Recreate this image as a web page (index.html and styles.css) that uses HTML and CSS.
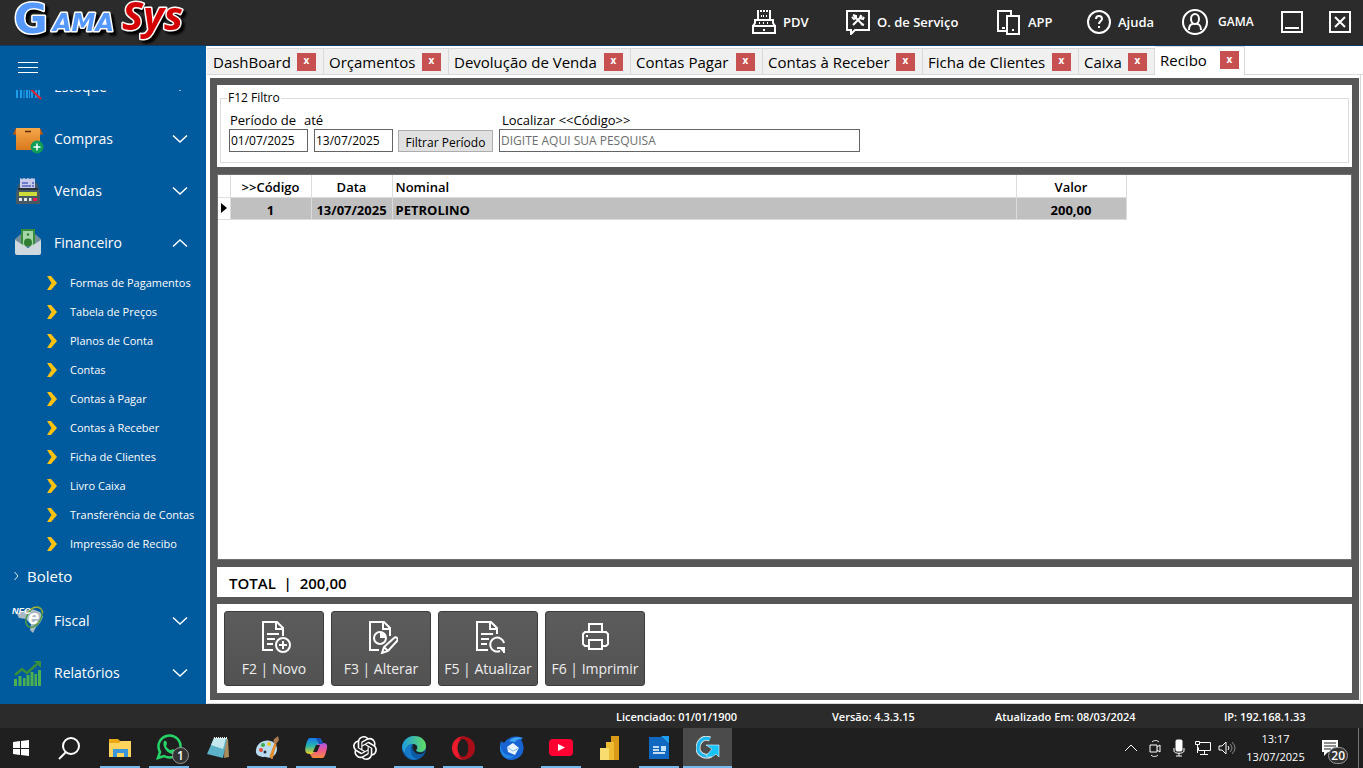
FILE: index.html
```html
<!DOCTYPE html>
<html lang="pt-BR">
<head>
<meta charset="utf-8">
<title>GamaSys</title>
<link rel="stylesheet" href="styles.css">
</head>
<body>
<header class="topbar">
  <svg class="logo" width="180" height="44" viewBox="0 0 180 44" role="img" aria-label="GamaSys">
    <text class="logo-g" x="0" y="33">G</text>
    <text class="logo-ama" x="39" y="31">AMA</text>
    <text class="logo-sys" x="108" y="30">Sys</text>
  </svg>
  <nav class="top-actions">
    <button class="top-btn"><svg width="24" height="26" viewBox="0 0 24 26" class="line-icon"><path d="M6 11V3M18 11V3"/><path d="M5 2h2M8 2h2M11 2h2M14 2h2M17 2h2M9 7h1M11 7h1M14 7h1M3 11h18v3l2 3H1l2-3zM1 17h22v7H1zM7 14h1M11 14h1M15 14h1M11 21h2"/></svg>PDV</button>
    <button class="top-btn"><svg width="24" height="26" viewBox="0 0 24 26" class="line-icon"><path d="M1 2h22v19H9l-4 4v-4H1z"/><path d="M8 7l9 9M16 7l-9 9"/><path d="M7 6l3 1v2l-2 1-2-2M15 15l3 1M15 6l-1 3 3 1 1-2"/></svg>O. de Serviço</button>
    <button class="top-btn"><svg width="24" height="26" viewBox="0 0 24 26" class="line-icon"><path d="M9 22H1V2h13v4M5 19h3M6 2h3M10 7h12v18H10zM15 21h2"/></svg>APP</button>
    <button class="top-btn"><svg width="24" height="26" viewBox="0 0 24 26" class="line-icon"><circle cx="12" cy="13" r="11"/><path d="M9 10c0-4 6-4 6 0 0 2-3 2-3 5"/><path d="M12 17v2"/></svg>Ajuda</button>
    <button class="top-btn top-user"><svg width="26" height="26" viewBox="0 0 26 26" class="line-icon"><circle cx="13" cy="13" r="12"/><ellipse cx="13" cy="10" rx="4" ry="5"/><path d="M7 21c0-4 2-6 4-6M19 21c0-4-2-6-4-6"/></svg>GAMA</button>
    <button class="top-btn" aria-label="Minimizar"><svg width="22" height="22" viewBox="0 0 22 22" class="line-icon"><path d="M1 1h20v20H1zM4 17h14"/></svg></button>
    <button class="top-btn" aria-label="Fechar"><svg width="22" height="22" viewBox="0 0 22 22" class="line-icon"><path d="M1 1h20v20H1zM6 6l10 10M16 6L6 16"/></svg></button>
  </nav>
</header>

<div class="workspace">
  <aside class="sidebar">
    <button class="hamburger" aria-label="Menu"><svg width="20" height="12" viewBox="0 0 20 12"><path d="M0 .5h20M0 5.500h20M0 10.500h20" stroke="#fff"/></svg></button>
    <nav class="menu">
      <button class="menu-item"><svg width="32" height="32" viewBox="0 0 32 32"><path d="M5 4v23M9 4v23M15 4v23M20 4v23M24 4v23M27 4v23" stroke="#1e9be9" stroke-width="2"/><path d="M12 4v23M17.500 4v23" stroke="#1e9be9"/><path d="M5 5l24 23" stroke="#e02030" stroke-width="2"/></svg><span>Estoque</span><svg class="chev" width="14" height="8" viewBox="0 0 14 8"><path d="M0 .5l7 6.500 7-6.500"/></svg></button>
      <button class="menu-item"><svg width="32" height="32" viewBox="0 0 32 32"><defs><linearGradient id="box" x2="0" y2="1"><stop stop-color="#f5a84a"/><stop offset="1" stop-color="#d9781d"/></linearGradient></defs><path d="M4 5L1 11l3 1zM28 5l3 6-3 1z" fill="#c05c12"/><path d="M4 5h24v22H4z" fill="url(#box)"/><path d="M13 8.500h6" stroke="#5a2b0a" stroke-width="1.500"/><circle cx="25" cy="24" r="6.500" fill="#0f9d58"/><path d="M25 20.500v7M21.500 24h7" stroke="#fff" stroke-width="1.500"/></svg><span>Compras</span><svg class="chev" width="14" height="8" viewBox="0 0 14 8"><path d="M0 .5l7 6.500 7-6.500"/></svg></button>
      <button class="menu-item"><svg width="32" height="32" viewBox="0 0 32 32"><path d="M7 8h18l3 10v11H4V18z" fill="#455a64"/><path d="M8 3l2 1 2-1 2 1 2-1 2 1 2-1 2 1 1-1v11H8z" fill="#c5cae9"/><path d="M10 8h6M10 11h9M20 8h2M20 11h2" stroke="#5560c0" stroke-width="1.500"/><path d="M6 14h20" stroke="#263238" stroke-width="2"/><path d="M7 17h18v4H7z" fill="#cddc39"/><path d="M7 23h3v3H7zM12 23h3v3h-3zM17 23h2.500v3H17z" fill="#e6e6e6"/><path d="M21 23h4v3h-4z" fill="#f02050"/></svg><span>Vendas</span><svg class="chev" width="14" height="8" viewBox="0 0 14 8"><path d="M0 .5l7 6.500 7-6.500"/></svg></button>
      <button class="menu-item" aria-expanded="true"><svg width="32" height="32" viewBox="0 0 32 32"><path d="M3 12l6-5h14l6 5v8H3z" fill="#78909c"/><path d="M9 2h14v17H9z" fill="#388e3c"/><path d="M11 4h10v15H11z" fill="#a5d6a7"/><circle cx="16" cy="7.500" r="1.200" fill="#2e7d32"/><path d="M3 13l13 8 13-8v13a2 2 0 0 1-2 2H5a2 2 0 0 1-2-2z" fill="#cfd8dc"/><circle cx="16" cy="15.500" r="4" fill="#2e7d32"/></svg><span>Financeiro</span><svg class="chev" width="14" height="8" viewBox="0 0 14 8"><path d="M0 7.500L7 1l7 6.500"/></svg></button>
      <div class="submenu">
        <button class="sub-item"><svg class="arrow" width="10" height="14" viewBox="0 0 10 14"><path d="M0 0h4l6 7-6 7H0l4.500-7z"/></svg>Formas de Pagamentos</button>
        <button class="sub-item"><svg class="arrow" width="10" height="14" viewBox="0 0 10 14"><path d="M0 0h4l6 7-6 7H0l4.500-7z"/></svg>Tabela de Preços</button>
        <button class="sub-item"><svg class="arrow" width="10" height="14" viewBox="0 0 10 14"><path d="M0 0h4l6 7-6 7H0l4.500-7z"/></svg>Planos de Conta</button>
        <button class="sub-item"><svg class="arrow" width="10" height="14" viewBox="0 0 10 14"><path d="M0 0h4l6 7-6 7H0l4.500-7z"/></svg>Contas</button>
        <button class="sub-item"><svg class="arrow" width="10" height="14" viewBox="0 0 10 14"><path d="M0 0h4l6 7-6 7H0l4.500-7z"/></svg>Contas à Pagar</button>
        <button class="sub-item"><svg class="arrow" width="10" height="14" viewBox="0 0 10 14"><path d="M0 0h4l6 7-6 7H0l4.500-7z"/></svg>Contas à Receber</button>
        <button class="sub-item"><svg class="arrow" width="10" height="14" viewBox="0 0 10 14"><path d="M0 0h4l6 7-6 7H0l4.500-7z"/></svg>Ficha de Clientes</button>
        <button class="sub-item"><svg class="arrow" width="10" height="14" viewBox="0 0 10 14"><path d="M0 0h4l6 7-6 7H0l4.500-7z"/></svg>Livro Caixa</button>
        <button class="sub-item"><svg class="arrow" width="10" height="14" viewBox="0 0 10 14"><path d="M0 0h4l6 7-6 7H0l4.500-7z"/></svg>Transferência de Contas</button>
        <button class="sub-item"><svg class="arrow" width="10" height="14" viewBox="0 0 10 14"><path d="M0 0h4l6 7-6 7H0l4.500-7z"/></svg>Impressão de Recibo</button>
      </div>
      <button class="group-item"><svg width="5" height="8" viewBox="0 0 5 8"><path d="M.5 0L4 4 .5 8" fill="none" stroke="#dce9f5"/></svg>Boleto</button>
      <button class="menu-item"><svg width="32" height="32" viewBox="0 0 32 32"><path d="M5 9l6-3 9-2 8 3 3 5-3 6-4 4-3 6-3-3 1-6-5-5-7-1z" fill="#a9bac6"/><ellipse cx="22" cy="12" rx="7" ry="11" transform="rotate(30 22 12)" fill="none" stroke="#4d9b45" stroke-width="1.500"/><path d="M15 8c5-8 15-7 16 0" fill="none" stroke="#c9b53a"/><text x="0" y="9" class="nfc">NFC</text><text x="16" y="19" class="nfe">e</text></svg><span>Fiscal</span><svg class="chev" width="14" height="8" viewBox="0 0 14 8"><path d="M0 .5l7 6.500 7-6.500"/></svg></button>
      <button class="menu-item"><svg width="32" height="32" viewBox="0 0 32 32"><path d="M2 22h3v7H2zM6.500 19h3v10h-3zM11 21h2.500v8H11zM14.500 18h3v11h-3zM18.500 15h3v14h-3zM22.500 17h2.500v12h-2.500zM26 13h3v16h-3z" fill="#4caf50"/><path d="M3 18l7-6 5 4 10-9" fill="none" stroke="#388e3c" stroke-width="2.500"/><path d="M22 4h7v7z" fill="#388e3c"/></svg><span>Relatórios</span><svg class="chev" width="14" height="8" viewBox="0 0 14 8"><path d="M0 .5l7 6.500 7-6.500"/></svg></button>
    </nav>
  </aside>

  <main class="content">
    <div class="tabs" role="tablist">
      <div class="tab tab-first" role="tab"><span>DashBoard</span><button class="tab-close">x</button></div>
      <div class="tab" role="tab"><span>Orçamentos</span><button class="tab-close">x</button></div>
      <div class="tab" role="tab"><span>Devolução de Venda</span><button class="tab-close">x</button></div>
      <div class="tab" role="tab"><span>Contas Pagar</span><button class="tab-close">x</button></div>
      <div class="tab" role="tab"><span>Contas à Receber</span><button class="tab-close">x</button></div>
      <div class="tab" role="tab"><span>Ficha de Clientes</span><button class="tab-close">x</button></div>
      <div class="tab" role="tab"><span>Caixa</span><button class="tab-close">x</button></div>
      <div class="tab tab-active" role="tab" aria-selected="true"><span>Recibo</span><button class="tab-close">x</button></div>
      <div class="tabs-rest"></div>
    </div>
    <div class="page">
      <div class="frame">
        <section class="panel filter-panel">
          <fieldset class="filter">
            <legend>F12 Filtro</legend>
            <div class="filter-row">
              <div class="filter-group">
                <div class="labels"><label for="from">Período de</label><label for="to">até</label></div>
                <div class="inputs"><input class="date" id="from" type="text" value="01/07/2025"><input class="date" id="to" type="text" value="13/07/2025"></div>
              </div>
              <button class="filter-btn">Filtrar Período</button>
              <div class="filter-group">
                <div class="labels labels-search"><label for="search">Localizar &lt;&lt;Código&gt;&gt;</label></div>
                <input class="search" id="search" type="text" placeholder="DIGITE AQUI SUA PESQUISA">
              </div>
            </div>
          </fieldset>
        </section>
        <section class="panel grid-panel">
          <table class="grid">
            <colgroup><col class="c-mark"><col class="c-code"><col class="c-date"><col class="c-name"><col class="c-value"></colgroup>
            <thead><tr><th></th><th>&gt;&gt;Código</th><th>Data</th><th class="left">Nominal</th><th>Valor</th></tr></thead>
            <tbody><tr><td class="mark"><svg width="6" height="10" viewBox="0 0 6 10"><path d="M0 0l6 5-6 5z"/></svg></td><td>1</td><td>13/07/2025</td><td class="left">PETROLINO</td><td>200,00</td></tr></tbody>
          </table>
        </section>
        <section class="panel total">TOTAL&nbsp; |&nbsp; 200,00</section>
        <section class="panel actions">
          <button class="action"><svg width="34" height="34" viewBox="0 0 34 34" class="line-icon"><path d="M16 30H6V2h14l6 6v8M19 2v7h7M10 14h12M10 19h8M10 24h6"/><circle cx="26" cy="25" r="7"/><path d="M26 21v8M22 25h8"/></svg>F2 | Novo</button>
          <button class="action"><svg width="34" height="34" viewBox="0 0 34 34" class="line-icon"><path d="M15 30H6V2h14l6 6v8M19 2v7h7"/><circle cx="16" cy="18" r="6"/><path d="M17 13v4h4c0-2-2-4-4-4z" fill="#fff"/><path d="M18 33l2-6 10-9c2-2 5 1 3 3l-9 10zM20 27l4 4" fill="#575757"/></svg>F3 | Alterar</button>
          <button class="action"><svg width="34" height="34" viewBox="0 0 34 34" class="line-icon"><path d="M17 30H6V2h14l6 6v6M19 2v7h7M10 14h12M10 19h8M10 24h6"/><path d="M33 23a7 7 0 1 0-4 8"/><path d="M33 27v6l-6-6z" fill="#fff" stroke="none"/><path d="M26 28h7v5"/></svg>F5 | Atualizar</button>
          <button class="action"><svg width="34" height="34" viewBox="0 0 34 34" class="line-icon"><path d="M11 11V4h13v7M11 26H7l-2-2V14l2-2h21l2 2v10l-2 2h-4M11 20h13v9H11zM8 16h2"/></svg>F6 | Imprimir</button>
        </section>
      </div>
    </div>
  </main>
</div>

<footer class="statusbar"><span>Licenciado: 01/01/1900</span><span>Versão: 4.3.3.15</span><span>Atualizado Em: 08/03/2024</span><span>IP: 192.168.1.33</span></footer>

<div class="taskbar">
  <button class="task task-start" aria-label="Iniciar"><svg width="16" height="16" viewBox="0 0 16 16"><path d="M0 2l7-1v7H0zM8 1l8-1v8H8zM0 9h7v6l-7-1zM8 9h8v7l-8-1z" fill="#fff"/></svg></button>
  <button class="task task-search" aria-label="Pesquisar"><svg width="24" height="24" viewBox="0 0 24 24"><circle cx="14" cy="10" r="8" fill="none" stroke="#fff" stroke-width="2"/><path d="M9 16l-7 7" stroke="#fff" stroke-width="2"/></svg></button>
  <button class="task open" aria-label="Explorador"><svg width="24" height="24" viewBox="0 0 24 24"><path d="M1 3h9l2 2h11v16H1z" fill="#e9a912"/><path d="M1 7h10l2-2h10v16H1z" fill="#ffd35c"/><path d="M5 13h15v8h-4v-4H9v4H5z" fill="#3c96db"/></svg></button>
  <button class="task open" aria-label="WhatsApp"><svg width="34" height="30" viewBox="0 0 34 30"><path d="M6 25l2-6a11 11 0 1 1 4 4z" fill="none" stroke="#25d366" stroke-width="2.500"/><path d="M12 8c2-1 3 1 3 3l-1 2c1 2 3 4 5 4l2-1c2 1 3 2 2 4-5 4-14-6-11-12z" fill="#25d366"/></svg><span class="count">1</span></button>
  <button class="task" aria-label="Bloco de notas"><svg width="24" height="24" viewBox="0 0 24 24"><path d="M19 2l3 1 1 18-5 1z" fill="#a98b5c"/><path d="M8 2h13l-4 20-16-4z" fill="#5cb3c9"/><path d="M8 2h12l-3 11-12-4z" fill="#c3e9ee"/><path d="M8 2h13" stroke="#eee" stroke-dasharray="1 1" stroke-width="2"/></svg></button>
  <button class="task open" aria-label="Paint"><svg width="26" height="24" viewBox="0 0 26 24"><path d="M2 14C3 6 12 2 19 6c6 4 5 12-1 15-4 2-6-1-8 0-4 0-9-2-8-7z" fill="#b9dcf0"/><circle cx="7" cy="14" r="2" fill="#e64b35"/><circle cx="9" cy="9" r="2" fill="#3cad48"/><circle cx="15" cy="8" r="2" fill="#e9c42e"/><circle cx="11" cy="16" r="1.500" fill="#20303a"/><path d="M16 20l5-13 1 1-4 15z" fill="#e58b2b" stroke="#e58b2b"/><path d="M20 7c-2-4 2-5 4-7l1 4-3 4z" fill="#ad7b4f"/></svg></button>
  <button class="task open" aria-label="Copilot"><svg width="24" height="22" viewBox="0 0 24 22"><defs><linearGradient id="cp1" x2="0" y2="1"><stop stop-color="#1678f2"/><stop offset=".5" stop-color="#27b6a7"/><stop offset="1" stop-color="#f0cd22"/></linearGradient><linearGradient id="cp2" x2="0" y2="1"><stop stop-color="#a957e8"/><stop offset=".5" stop-color="#ef598d"/><stop offset="1" stop-color="#f78b3c"/></linearGradient></defs><path d="M6 1h9c2 0 3 3 4 6h-4l-4 7c-1 3-3 3-5 3C0 17 1 12 2 8s2-7 4-7z" fill="url(#cp1)"/><path d="M18 21H9c-1 0-2-2-3-4 4 0 4-2 5-5l2-4c1-2 3-2 6-2 6 0 4 5 3 9s-2 6-4 6z" fill="url(#cp2)"/><path d="M12 1h4l3 6h-4z" fill="#1850b9"/><path d="M12 8h4l-3 7H9z" fill="#1f1f1f"/></svg></button>
  <button class="task" aria-label="ChatGPT"><svg width="24" height="24" viewBox="0 0 24 24"><path fill="#fff" d="M22.282 9.821a5.985 5.985 0 0 0-.516-4.911 6.046 6.046 0 0 0-6.510-2.900A6.065 6.065 0 0 0 4.981 4.182a5.985 5.985 0 0 0-3.998 2.900 6.046 6.046 0 0 0 .743 7.097 5.980 5.980 0 0 0 .511 4.911 6.051 6.051 0 0 0 6.515 2.900A5.985 5.985 0 0 0 13.260 24a6.056 6.056 0 0 0 5.772-4.206 5.989 5.989 0 0 0 3.998-2.900 6.056 6.056 0 0 0-.748-7.073zm-9.022 12.608a4.476 4.476 0 0 1-2.876-1.041l.142-.080 4.778-2.758a.795.795 0 0 0 .393-.681v-6.737l2.020 1.169a.071.071 0 0 1 .038.052v5.583a4.504 4.504 0 0 1-4.495 4.494zm-9.661-4.125a4.471 4.471 0 0 1-.535-3.014l.142.085 4.783 2.758a.771.771 0 0 0 .781 0l5.843-3.369v2.332a.080.080 0 0 1-.033.062L9.740 19.950a4.499 4.499 0 0 1-6.141-1.646zM2.341 7.896a4.485 4.485 0 0 1 2.366-1.973V11.600a.766.766 0 0 0 .388.677l5.814 3.354-2.020 1.169a.076.076 0 0 1-.071 0l-4.830-2.787A4.504 4.504 0 0 1 2.341 7.872zm16.596 3.856L13.104 8.364 15.119 7.200a.076.076 0 0 1 .071 0l4.830 2.791a4.494 4.494 0 0 1-.677 8.104v-5.677a.790.790 0 0 0-.407-.667zm2.011-3.023l-.142-.085-4.774-2.782a.776.776 0 0 0-.785 0L9.409 9.230V6.897a.066.066 0 0 1 .028-.062l4.830-2.787a4.499 4.499 0 0 1 6.680 4.660zM8.307 12.863l-2.020-1.164a.080.080 0 0 1-.038-.057V6.074a4.499 4.499 0 0 1 7.376-3.454l-.142.081L8.704 5.459a.795.795 0 0 0-.393.681zm1.098-2.365l2.602-1.500 2.607 1.500v2.999l-2.597 1.500-2.607-1.500Z"/></svg></button>
  <button class="task open" aria-label="Edge"><svg width="24" height="24" viewBox="0 0 24 24"><defs><linearGradient id="ed"><stop stop-color="#1d9be0"/><stop offset="1" stop-color="#62dd63"/></linearGradient></defs><circle cx="12" cy="12" r="12" fill="#0c59a4"/><path d="M0 11C1 4 6 0 12 0c8 0 12 5 12 10 0 4-3 6-6 6-2 0-4-1-4-2 3-2 1-6-3-6-5 0-8 4-8 9-2-2-3-4-3-6z" fill="url(#ed)"/><path d="M3 17c0-5 3-9 8-9-4 3-3 14 5 15-5 2-11 0-13-6z" fill="#147ac9"/><path d="M11 8c4 0 5 4 3 6 0 2 4 4 9 1-1 2-3 3-5 3-5 1-9-6-7-10z" fill="#1f1f1f"/></svg></button>
  <button class="task open" aria-label="Opera"><svg width="24" height="24" viewBox="0 0 24 24"><ellipse cx="12" cy="12" rx="11" ry="11.500" fill="#ee1b2d"/><path d="M15 1c12 2 12 20 0 22-5 1-8-3-8-3 14 1 14-18 0-16 0 0 3-4 8-3z" fill="#a80d18"/><ellipse cx="12" cy="12" rx="5.500" ry="9" fill="#1f1f1f"/></svg></button>
  <button class="task" aria-label="Thunderbird"><svg width="24" height="24" viewBox="0 0 24 24"><path d="M1 5l3 2c5-7 12-8 19-5l-2 2c5 7 3 19-9 20C2 24-2 14 1 5z" fill="#1764d2"/><path d="M9 5c5-5 10-4 14-3-3 1-6 1-8 4z" fill="#42a5f5"/><path d="M7 11l6-4 6 5-4 7-7-3z" fill="#e9f4ff"/><path d="M7 11l6 4 6-3" fill="none" stroke="#83bdf3"/><path d="M1 6c-1 9 3 14 13 14-4 5-14 2-14-8z" fill="#2387e8"/></svg></button>
  <button class="task open" aria-label="YouTube"><svg width="24" height="18" viewBox="0 0 24 18"><rect width="24" height="17" rx="4" fill="#ff0033"/><path d="M9 5l7 3.500L9 12z" fill="#fff"/></svg></button>
  <button class="task" aria-label="Power BI"><svg width="20" height="24" viewBox="0 0 20 24"><path d="M11 0h8v24h-8z" fill="#d99a17"/><path d="M6 6h8v18H6z" fill="#eebd34"/><path d="M0 12h9v12H0z" fill="#f8dc70"/></svg></button>
  <button class="task open" aria-label="Writer"><svg width="20" height="24" viewBox="0 0 20 24"><path d="M0 1h13l7 7v15H0z" fill="#1168c1"/><path d="M12 0h8v8z" fill="#1ea0ef"/><path d="M4 11h6M4 14h6M4 17h12" stroke="#fff" stroke-width="1.500"/><path d="M12 10h5v5h-5z" fill="#bfe3ff"/></svg></button>
  <button class="task open current" aria-label="GamaSys"><svg width="24" height="24" viewBox="0 0 24 24"><path d="M14 3C7 0 2 6 2 12c0 7 8 10 13 7" fill="none" stroke="#ddd" stroke-width="5"/><path d="M14 3C7 0 2 6 2 12c0 7 8 10 13 7" fill="none" stroke="#18b8ee" stroke-width="3"/><path d="M10 9h13v12l-3-3c-3 3-7 4-10 2l6-7z" fill="#18c4fa" stroke="#ccecf8" stroke-width=".7"/></svg></button>
  <div class="tray">
    <svg width="24" height="20" viewBox="0 0 24 20" class="tray-icon"><path d="M6 13l6-6 6 6"/></svg>
    <svg width="24" height="20" viewBox="0 0 24 20" class="tray-icon"><path d="M7 7h7v7H7zM14 9l3-2v7l-3-2M9 4c2-2 5-2 7 0M8 17c2 2 5 2 7 0"/></svg>
    <svg width="24" height="20" viewBox="0 0 24 20" class="tray-icon"><rect x="9" y="2" width="6" height="11" rx="1" fill="#fff"/><path d="M7 10v3c0 3 10 3 10 0v-3M12 15v3M9 18h6"/></svg>
    <svg width="24" height="20" viewBox="0 0 24 20" class="tray-icon"><path d="M9 4.500h10.500v8H7.500v-3M4.500 3.500h4v3h-4zM6.500 7v8M13.500 13v3M9 16.500h8"/></svg>
    <svg width="24" height="20" viewBox="0 0 24 20" class="tray-icon"><path d="M4 8h3l4-4v12l-4-4H4zM13 8q2 2 0 4"/><path d="M15 6q4 4 0 8M17 4q6 6 0 12" stroke="#888"/></svg>
    <div class="clock"><span>13:17</span><span>13/07/2025</span></div>
    <div class="notes"><svg width="16" height="16" viewBox="0 0 16 16"><path d="M0 0h16v12H6l-4 4v-4H0z" fill="#fff"/><path d="M2 3h12M2 6h12M2 9h7" stroke="#1f1f1f"/></svg><span class="count">20</span></div>
  </div>
</div>
</body>
</html>
```
FILE: styles.css
```css
* { box-sizing: border-box; }
html, body { height: 100%; margin: 0; }
body {
  display: flex;
  flex-direction: column;
  overflow: hidden;
  font: 12px/16px "Open Sans", "Noto Sans", sans-serif;
  color: #000;
  background: #fff;
}
button, input { font: inherit; color: inherit; margin: 0; }
button { border: 0; padding: 0; background: none; white-space: nowrap; }
svg { flex: none; display: block; }
.line-icon { fill: none; stroke: #fff; stroke-width: 2; }

/* Top bar */
.topbar {
  display: flex;
  flex: none;
  align-items: center;
  justify-content: space-between;
  height: 46px;
  padding: 0 12px 1px 14px;
  background: #2b2b2b;
  border-bottom: 1px solid #0b3a66;
}
.logo { filter: drop-shadow(3px 3px 1px #000); overflow: visible; }
.logo text { font-family: "DejaVu Sans", sans-serif; font-weight: bold; paint-order: stroke; stroke: #fff; stroke-width: 3px; stroke-linejoin: round; }
.logo .logo-g { font-size: 41px; fill: #5599ff; }
.logo .logo-ama { font-size: 24px; font-style: italic; fill: #5599ff; }
.logo .logo-sys { font-family: "Open Sans", sans-serif; font-size: 40px; font-style: italic; fill: #d40000; }
.top-actions {
  display: grid;
  grid-template-columns: 94px 151px 90px 95px 99px 48px 22px;
}
.top-btn { display: flex; align-items: center; gap: 7px; color: #fff; font-size: 13px; font-weight: 600; }
.top-user { gap: 10px; font-size: 12px; }

/* Side menu */
.workspace { display: flex; flex: 1; min-height: 0; }
.sidebar { display: flex; flex: none; flex-direction: column; width: 206px; background: #005a9e; color: #fff; }
.hamburger { flex: none; height: 44px; padding-left: 18px; }
.menu { display: flex; flex: 1; flex-direction: column; justify-content: flex-end; min-height: 0; overflow: hidden; padding-bottom: 5px; }
.menu-item { display: flex; flex: none; align-items: center; gap: 10px; height: 52px; padding: 0 19px 0 12px; font-size: 14px; }
.chev { margin-left: auto; fill: none; stroke: #fff; stroke-width: 1.500; overflow: visible; }
.submenu { display: flex; flex: none; flex-direction: column; }
.sub-item { display: flex; align-items: center; gap: 13px; height: 29px; padding-left: 47px; padding-bottom: 2px; font-size: 11px; }
.arrow { fill: #ffc20e; }
.group-item { display: flex; flex: none; align-items: center; gap: 8px; height: 36px; padding-left: 14px; padding-bottom: 2px; font-size: 15px; }
.nfc { font: italic bold 9px "Liberation Sans", sans-serif; fill: #fff; }
.nfe { font: italic bold 20px "Liberation Sans", sans-serif; fill: #fff; }

/* Tabs */
.content { display: flex; flex: 1; flex-direction: column; min-width: 0; padding-left: 1px; background: #fff; }
.tabs { display: grid; flex: none; grid-template-columns: 117px 125px 182px 132px 160px 156px 76px 90px 1fr; align-items: end; height: 29px; }
.tab {
  display: flex;
  align-items: center;
  justify-content: space-between;
  height: 27px;
  padding: 0 7px 0 5px;
  font-size: 15px;
  background: #f0f0f0;
  border: solid #d9d9d9;
  border-width: 1px 1px 1px 0;
}
.tab-first { padding-left: 6px; }
.tab-active { height: 29px; padding: 0 5px 2px; background: #fff; border-bottom: 0; }
.tabs-rest { align-self: stretch; border-bottom: 1px solid #d9d9d9; }
.tab-close { width: 19px; height: 18px; color: #fff; background: #c75050; font: bold 10px/14px "Open Sans", sans-serif; padding-bottom: 3px; }

/* Page */
.page { display: flex; flex: 1; min-height: 0; margin-right: 2px; padding: 3px 1px 3px 3px; border-right: 1px solid #d9d9d9; border-bottom: 1px solid #d9d9d9; }
.frame { display: flex; flex: 1; flex-direction: column; gap: 7px; min-width: 0; padding: 7px; background: #575757; }
.panel { background: #fff; }
.filter-panel { padding: 5px 3px 4px; }
.filter { min-width: 0; margin: 0; padding: 6px 8px 10px; border: 1px solid #dcdcdc; }
.filter legend { margin-left: -2px; padding: 0 1px; }
.filter-row { display: flex; align-items: flex-end; }
.filter-group { display: flex; flex-direction: column; gap: 1px; }
.labels { display: flex; gap: 8px; padding-left: 1px; font-size: 13px; }
.labels-search { padding-left: 3px; }
.inputs { display: flex; gap: 6px; }
.date, .search { height: 23px; padding: 0 1px; border: 1px solid #646464; background: #fff; }
.date { width: 79px; }
.search { width: 361px; }
.search::placeholder { color: #6d6d6d; opacity: 1; }
.filter-btn { height: 22px; width: 95px; margin: 0 6px 0 5px; padding-top: 3px; background: #e1e1e1; border: 1px solid #adadad; }

.grid-panel { flex: 1; min-height: 0; border: 1px solid #707070; }
.grid { table-layout: fixed; width: 908px; border-collapse: collapse; font-size: 13px; }
.c-mark { width: 12px; }
.c-code, .c-date { width: 81px; }
.c-name { width: 624px; }
.c-value { width: 110px; }
.grid th, .grid td { height: 22px; padding: 3px 3px 0; text-align: center; border-right: 1px solid #dcdcdc; border-bottom: 1px solid #dcdcdc; }
.grid th { font-weight: 600; }
.grid td { font-weight: 700; background: #c0c0c0; }
.grid .left { text-align: left; padding-left: 3px; }
.grid .mark { padding-top: 0; background: #fff; }

.total { padding: 7px 12px 5px; font-size: 15px; line-height: 18px; font-weight: 600; }
.actions { display: flex; gap: 7px; padding: 7px; }
.action {
  display: flex;
  flex-direction: column;
  align-items: center;
  gap: 7px;
  width: 100px;
  height: 75px;
  padding-top: 8px;
  font-size: 14px;
  color: #eee;
  background: linear-gradient(#5c5c5c, #525252);
  border: 1px solid #3c3c3c;
  border-radius: 3px;
}

/* Status bar */
.statusbar {
  display: grid;
  flex: none;
  grid-template-columns: 216px 163px 229px 83px;
  justify-content: end;
  align-items: center;
  height: 24px;
  padding-top: 1px;
  padding-right: 56px;
  color: #fff;
  font-size: 11px;
  font-weight: 600;
  background: #2b2b2b;
}

/* Taskbar */
.taskbar { display: flex; flex: none; height: 40px; background: #1f1f1f; color: #fff; }
.task { position: relative; display: flex; flex: none; align-items: center; justify-content: center; width: 49px; }
.task-start { width: 42px; }
.task-search { width: 53px; }
.open::after { content: ""; position: absolute; left: 5px; right: 4px; bottom: 0; height: 2px; background: #76b9ed; }
.current { background: #4b4b4b; }
.current::after { left: 0; right: 0; }
.count {
  position: absolute;
  right: 4px;
  bottom: 4px;
  min-width: 17px;
  height: 17px;
  padding: 0 2px;
  border: 1px solid #999;
  border-radius: 9px;
  background: #333;
  font-size: 12px;
  font-weight: 600;
  line-height: 15px;
  text-align: center;
}
.tray { display: flex; align-items: center; margin-left: auto; padding-right: 4px; }
.tray-icon { fill: none; stroke: #fff; }
.clock { display: flex; flex-direction: column; align-items: center; width: 73px; font-size: 11px; line-height: 18px; }
.notes { position: relative; display: flex; align-items: center; width: 47px; height: 40px; padding-left: 10px; border-right: 1px solid #777; }
.notes .count { right: 10px; }
```
